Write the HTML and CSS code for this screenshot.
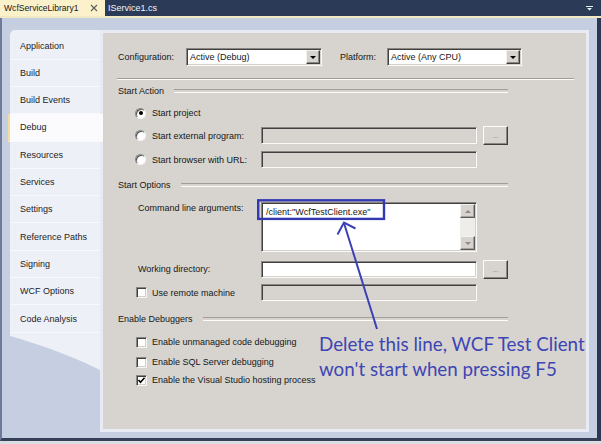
FILE: index.html
```html
<!DOCTYPE html>
<html>
<head>
<meta charset="utf-8">
<title>WcfServiceLibrary1 - Debug</title>
<link rel="stylesheet" href="styles.css">
</head>
<body>
<div class="window">
  <div class="tabbar">
    <div class="tab active">
      <span class="tab-title">WcfServiceLibrary1</span>
      <svg class="tab-close" width="8" height="8" viewBox="0 0 8 8"><path d="M1 1 L7 7 M7 1 L1 7" stroke="#5a5a5a" stroke-width="1.1" fill="none"/></svg>
    </div>
    <div class="tab"><span class="tab-title">IService1.cs</span></div>
    <div class="tab-spacer"></div>
    <svg class="tab-menu" width="7" height="5" viewBox="0 0 7 5"><path d="M0 0 H7 V1 H0 Z M1 2 H6 L3.5 4.5 Z" fill="#e8ecf4"/></svg>
  </div>
  <div class="strip"></div>
  <div class="well">
    <nav class="sidebar">
      <div class="nav-list">
        <div class="nav-item">Application</div>
        <div class="nav-item">Build</div>
        <div class="nav-item">Build Events</div>
        <div class="nav-item selected">Debug</div>
        <div class="nav-item">Resources</div>
        <div class="nav-item">Services</div>
        <div class="nav-item">Settings</div>
        <div class="nav-item">Reference Paths</div>
        <div class="nav-item">Signing</div>
        <div class="nav-item">WCF Options</div>
        <div class="nav-item">Code Analysis</div>
      </div>
      <svg class="tail" width="90" height="38" viewBox="0 0 90 38"><path d="M0 0 H90 V37 L87 35.5 C60 22 25 10 0 3 Z" fill="#eef0f7"/></svg>
    </nav>
    <main class="panel">
      <div class="config-row">
        <span class="cfg-label">Configuration:</span>
        <div class="combo cfg-combo"><span class="combo-text">Active (Debug)</span><span class="combo-btn"><i class="tri-down"></i></span></div>
        <span class="plat-label">Platform:</span>
        <div class="combo plat-combo"><span class="combo-text">Active (Any CPU)</span><span class="combo-btn"><i class="tri-down"></i></span></div>
      </div>
      <div class="sep"></div>

      <div class="group g-start-action"><span>Start Action</span></div>
      <div class="row r-project">
        <div class="lbl indent-radio"><span class="radio checked"></span>Start project</div>
      </div>
      <div class="row r-external">
        <div class="lbl indent-radio"><span class="radio"></span>Start external program:</div>
        <div class="textbox disabled"></div>
        <div class="btn">...</div>
      </div>
      <div class="row r-browser">
        <div class="lbl indent-radio"><span class="radio"></span>Start browser with URL:</div>
        <div class="textbox disabled"></div>
      </div>

      <div class="group g-start-options"><span>Start Options</span></div>
      <div class="row r-cmd">
        <div class="lbl indent-text">Command line arguments:</div>
        <div class="textarea">
          <div class="ta-text">/client:"WcfTestClient.exe"</div>
          <div class="sb">
            <div class="sb-btn"><i class="sb-up"></i></div>
            <div class="sb-track"></div>
            <div class="sb-btn"><i class="sb-down"></i></div>
          </div>
        </div>
      </div>
      <div class="row r-workdir">
        <div class="lbl indent-text">Working directory:</div>
        <div class="textbox"></div>
        <div class="btn">...</div>
      </div>
      <div class="row r-remote">
        <div class="lbl indent-check"><span class="check"></span>Use remote machine</div>
        <div class="textbox disabled"></div>
      </div>

      <div class="group g-debuggers"><span>Enable Debuggers</span></div>
      <div class="row r-cb1">
        <div class="lbl indent-check wide"><span class="check"></span>Enable unmanaged code debugging</div>
      </div>
      <div class="row r-cb2">
        <div class="lbl indent-check wide"><span class="check"></span>Enable SQL Server debugging</div>
      </div>
      <div class="row r-cb3">
        <div class="lbl indent-check wide"><span class="check checked"><svg width="9" height="9" viewBox="0 0 9 9"><path d="M1.5 4 L3.5 6.2 L7.5 1.8" stroke="#000" stroke-width="1.6" fill="none"/></svg></span>Enable the Visual Studio hosting process</div>
      </div>
    </main>
  </div>

  <svg class="annot" width="601" height="444" viewBox="0 0 601 444">
    <rect x="258.2" y="200.3" width="125.8" height="18.6" fill="none" stroke="#3239b3" stroke-width="2.4"/>
    <path d="M377 329 L344 223" stroke="#3a40b6" stroke-width="2" fill="none"/>
    <path d="M337.5 234.5 L344 222.5 L355.5 228.5" stroke="#3a40b6" stroke-width="2" fill="none" stroke-linejoin="miter"/>
  </svg>
  <div class="note">Delete this line, WCF Test Client<br>won't start when pressing F5</div>
</div>
</body>
</html>
```
FILE: styles.css
```css
* { box-sizing: border-box; }
html, body { margin: 0; padding: 0; }
body {
  width: 601px;
  height: 444px;
  overflow: hidden;
  background: #dcdde2;
  font-family: "Liberation Sans", Arial, sans-serif;
  font-size: 9px;
  color: #161616;
}
.window {
  position: relative;
  width: 601px;
  height: 441px;
  display: flex;
  flex-direction: column;
}

/* document tab bar */
.tabbar {
  height: 16px;
  flex: none;
  background: #2b3a57;
  display: flex;
  align-items: stretch;
}
.tab {
  display: flex;
  align-items: center;
  padding-left: 3px;
  color: #f4f6fa;
  font-size: 9px;
}
.tab.active {
  width: 105px;
  padding-left: 4px;
  background: #fbf2cb;
  color: #151515;
  font-size: 8.6px;
}
.tab-close { margin-left: 11px; }
.tab-spacer { flex: 1; }
.tab-menu { align-self: center; margin-right: 8px; margin-top: 1px; }
.strip { height: 2px; flex: none; background: #f2e8c2; }

/* blue document well */
.well {
  flex: 1;
  display: flex;
  background: #c6cee1;
  padding: 12px 8px 6px 8px;
  border-left: 2px solid #6f7c99;
  border-right: 4px solid #2d3751;
  border-bottom: 3px solid #353f58;
}

/* left navigation */
.sidebar {
  width: 90px;
  flex: none;
  display: flex;
  flex-direction: column;
}
.nav-list {
  background: #eef0f7;
  border-top-left-radius: 5px;
  padding-top: 2.4px;
}
.nav-item {
  height: 27.3px;
  display: flex;
  align-items: center;
  padding-left: 10px;
  border-bottom: 1px solid #f8f9fc;
  color: #1c1c1c;
}
.nav-item.selected {
  position: relative;
  z-index: 1;
  margin-left: -2px;
  margin-right: -3px;
  padding-left: 10px;
  border-left: 2px solid #f0dd9f;
  background: #fbfbfd;
}
.tail { display: block; }

/* property page */
.panel {
  flex: 1;
  display: flex;
  flex-direction: column;
  background: #d7d4cf;
  border: 3px solid #e8eaf4;
  padding: 15px 12px 0 15px;
}
.config-row {
  height: 18px;
  display: flex;
  align-items: center;
}
.cfg-label { width: 68px; flex: none; }
.plat-label { width: 47px; flex: none; margin-left: 18px; }
.combo {
  height: 18px;
  display: flex;
  align-items: center;
  background: #fff;
  border: 1px solid;
  border-color: #8a8782 #fbfbfa #fbfbfa #8a8782;
  box-shadow: inset 1px 1px 0 #404040, inset -1px -1px 0 #d4d0c8;
}
.cfg-combo { width: 136px; }
.plat-combo { width: 135px; }
.combo-text { flex: 1; padding-left: 3px; }
.combo-btn {
  width: 14px;
  height: 14px;
  margin-right: 1px;
  background: #d7d4cf;
  border: 1px solid;
  border-color: #f3f2ef #3f3f3f #3f3f3f #f3f2ef;
  box-shadow: inset -1px -1px 0 #8a8782;
  display: flex;
  align-items: center;
  justify-content: center;
}
.tri-down {
  width: 0; height: 0;
  border-left: 3px solid transparent;
  border-right: 3px solid transparent;
  border-top: 3px solid #000;
  margin-top: 1px;
}

.sep {
  margin-top: 12px;
  margin-left: -1px;
  height: 2px;
  border-top: 1px solid #a19e98;
  border-bottom: 1px solid #fbfbfa;
}
.group {
  width: 390px;
  height: 12px;
  display: flex;
  align-items: center;
}
.group::after {
  content: "";
  flex: 1;
  height: 2px;
  margin-left: 10px;
  border-top: 1px solid #a19e98;
  border-bottom: 1px solid #fbfbfa;
}
.g-start-action { margin-top: 5px; }
.g-start-options { margin-top: 11px; }
.g-debuggers { margin-top: 12px; }

.row { display: flex; align-items: center; }
.lbl {
  width: 143px;
  flex: none;
  display: flex;
  align-items: center;
  white-space: nowrap;
}
.lbl.wide { width: auto; }
.indent-radio { padding-left: 17px; }
.indent-check { padding-left: 18px; }
.indent-text { padding-left: 20px; }

.r-project { margin-top: 8px; height: 16px; }
.r-external { margin-top: 5px; height: 19px; }
.r-browser { margin-top: 6px; height: 17px; }
.r-cmd { margin-top: 11px; height: 50px; align-items: flex-start; }
.r-cmd .lbl { height: 12px; }
.r-workdir { margin-top: 7px; height: 20px; }
.r-remote { margin-top: 5px; height: 17px; }
.r-cb1 { margin-top: 9px; height: 16px; }
.r-cb2 { margin-top: 4px; height: 16px; }
.r-cb3 { margin-top: 2px; height: 16px; }

.radio {
  width: 11px;
  height: 11px;
  flex: none;
  margin-right: 6px;
  border-radius: 50%;
  background: #fff;
  border: 1px solid;
  border-color: #8a8782 #f4f3f1 #f4f3f1 #8a8782;
  box-shadow: inset 1px 1px 0 #505050;
  display: flex;
  align-items: center;
  justify-content: center;
}
.radio.checked::after {
  content: "";
  width: 4px;
  height: 4px;
  border-radius: 50%;
  background: #000;
}
.check {
  width: 11px;
  height: 11px;
  flex: none;
  margin-right: 5px;
  background: #fff;
  border: 1px solid;
  border-color: #8a8782 #f6f5f3 #f6f5f3 #8a8782;
  box-shadow: inset 1px 1px 0 #404040, inset -1px -1px 0 #d4d0c8;
  display: flex;
  align-items: center;
  justify-content: center;
}
.check svg { display: block; }

.textbox {
  width: 216px;
  height: 17px;
  flex: none;
  background: #fff;
  border: 1px solid;
  border-color: #8a8782 #fbfbfa #fbfbfa #8a8782;
  box-shadow: inset 1px 1px 0 #404040, inset -1px -1px 0 #d4d0c8;
}
.textbox.disabled { background: #d7d4cf; }
.btn {
  width: 25px;
  height: 19px;
  flex: none;
  margin-left: 6px;
  background: #d7d4cf;
  border: 1px solid;
  border-color: #fbfbfa #3f3f3f #3f3f3f #fbfbfa;
  box-shadow: inset -1px -1px 0 #8a8782;
  color: #8d8a85;
  font-size: 8px;
  display: flex;
  align-items: flex-end;
  justify-content: center;
  padding-bottom: 4px;
  line-height: 8px;
}

.textarea {
  width: 216px;
  height: 50px;
  flex: none;
  display: flex;
  background: #fff;
  border: 1px solid;
  border-color: #8a8782 #fbfbfa #fbfbfa #8a8782;
  box-shadow: inset 1px 1px 0 #404040, inset -1px -1px 0 #d4d0c8;
  padding: 1px;
}
.ta-text {
  flex: 1;
  padding: 2px 0 0 3px;
  line-height: 12px;
  white-space: nowrap;
}
.sb {
  width: 15px;
  flex: none;
  display: flex;
  flex-direction: column;
  background: #eeede9;
}
.sb-btn {
  height: 14px;
  flex: none;
  background: #d7d4cf;
  border: 1px solid;
  border-color: #f3f2ef #5a5a5a #5a5a5a #f3f2ef;
  box-shadow: inset -1px -1px 0 #a4a19b;
  display: flex;
  align-items: center;
  justify-content: center;
}
.sb-track { flex: 1; }
.sb-up, .sb-down {
  width: 0; height: 0;
  border-left: 3px solid transparent;
  border-right: 3px solid transparent;
}
.sb-up { border-bottom: 3px solid #8f8c87; }
.sb-down { border-top: 3px solid #8f8c87; }

/* annotation overlay */
.annot {
  position: absolute;
  left: 0;
  top: 0;
  pointer-events: none;
}
.note {
  position: absolute;
  left: 319px;
  top: 332px;
  font-family: Lato, "Open Sans", sans-serif;
  font-size: 18.8px;
  line-height: 24.5px;
  color: #3e45b4;
  white-space: nowrap;
}
```
